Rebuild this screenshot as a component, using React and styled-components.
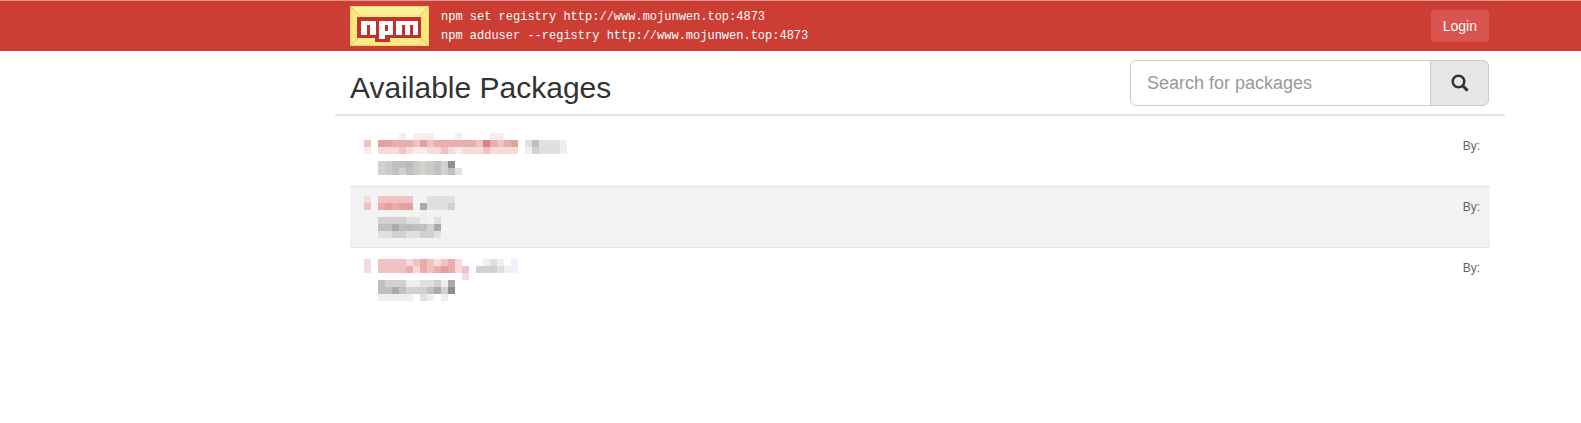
import React from "react";
import styled, { createGlobalStyle } from "styled-components";

const GlobalStyle = createGlobalStyle`
  * { box-sizing: border-box; }
  body {
    margin: 0;
    background: #fff;
    color: #333;
    font-family: "Liberation Sans", Arial, sans-serif;
    font-size: 14px;
    line-height: 20px;
  }
`;

const Header = styled.header`
  background: #cc3d33;
  border-top: 1px solid #dc9a92;
  padding: 0 92px 0 350px;
`;

const HeaderRow = styled.div`
  display: flex;
  align-items: center;
  height: 50px;
`;

const LogoLink = styled.a`
  display: block;
  margin-right: 12px;
  svg { display: block; }
`;

const Commands = styled.code`
  flex: 1;
  padding-top: 2px;
  color: #fff;
  font-family: Consolas, "Liberation Mono", monospace;
  font-size: 12px;
  line-height: 19px;
  white-space: pre;
`;

const LoginButton = styled.button`
  height: 32px;
  padding: 0 12px;
  border: 0;
  border-radius: 3px;
  background: #d9534f;
  color: #fff;
  font: inherit;
`;

const Main = styled.main`
  padding: 0 76px 0 335px;
`;

const TitleBar = styled.div`
  display: flex;
  justify-content: space-between;
  align-items: flex-start;
  height: 65px;
  padding: 9px 16px 0 15px;
  border-bottom: 2px solid #e4e4e4;
`;

const Title = styled.h2`
  margin: 11px 0 0;
  font-size: 30px;
  font-weight: 400;
  line-height: 34px;
`;

const SearchForm = styled.form`
  display: flex;
  width: 359px;
  height: 46px;
`;

const SearchInput = styled.input`
  flex: 1;
  min-width: 0;
  padding: 0 16px;
  border: 1px solid #ccc;
  border-radius: 6px 0 0 6px;
  background: #fff;
  color: #555;
  font: inherit;
  font-size: 18px;
  &::placeholder { color: #999; opacity: 1; }
`;

const SearchButton = styled.button`
  display: flex;
  align-items: center;
  justify-content: center;
  width: 59px;
  margin-left: -1px;
  padding: 0;
  border: 1px solid #ccc;
  border-radius: 0 6px 6px 0;
  background: #e6e6e6;
  color: #333;
`;

const PackageList = styled.ul`
  list-style: none;
  margin: 9px 15px 0;
  padding: 0;
`;

const PackageRow = styled.li`
  display: flex;
  justify-content: space-between;
  align-items: flex-start;
  height: 61px;
  padding: 7px 10px 0 14px;
  border-top: 1px solid transparent;
  &:nth-child(even) {
    height: 62px;
    margin-bottom: -1px;
    background: #f3f3f3;
    border-top-color: #e3e3e3;
    border-bottom: 1px solid #e3e3e3;
  }
`;

const Author = styled.span`
  padding-top: 3px;
  color: #666;
  font-size: 12px;
`;

const CELL = 7;

const shades = {
  a: "#faeceb", b: "#f7dbda", c: "#f0c3c2", d: "#eaadac", e: "#e5a09d", f: "#dc7f86",
  1: "#efeff0", 2: "#e0e0e1", 3: "#d1d1d2", 4: "#bfc0c0", 5: "#a9aaab", 6: "#8e8f94",
  p: "#c4b6b9", g: "#c9ccc4", v: "#eef1fb",
};

const packages = [
  {
    id: "first",
    top: 0,
    rows: [
      ".....a.aaa...a....aa",
      "c.eedddcecddddddcfdcde.242221",
      "a.bbbcbaabbcbabbbcbbbb.132221",
      "",
      "..3g44pg3g436",
      "..3g434g3g4342",
    ],
  },
  {
    id: "second",
    top: 2,
    rows: [
      "b.ccccc..2222",
      "c.dedee.52223",
      "........1....",
      "..3333221.2",
      "..4454p4435",
      "..223322332",
    ],
  },
  {
    id: "third",
    top: 4,
    rows: [
      "b.ccccbcdcbcdb...121.v",
      "b.ccccdbdcdedbc.33321v",
      "..............b",
      "..43331122315",
      "..44543334536",
      "..11111.21.1",
    ],
  },
];

function Mosaic({ rows, top }) {
  return (
    <svg width={29 * CELL} height={49} shapeRendering="crispEdges" aria-hidden="true">
      {rows.flatMap((row, y) =>
        [...row].map((key, x) =>
          shades[key] ? (
            <rect
              key={`${x}-${y}`}
              x={x * CELL}
              y={top + y * CELL}
              width={CELL}
              height={CELL}
              fill={shades[key]}
            />
          ) : null
        )
      )}
    </svg>
  );
}

function Logo() {
  return (
    <svg width="79" height="40" viewBox="0 0 79 40" role="img" aria-label="npm">
      <rect width="79" height="40" fill="#fde87c" />
      <path d="M0 0H79L70 9H9Z" fill="#fff09a" />
      <path d="M0 40H79L70 31H9Z" fill="#fbe886" />
      <path d="M0 0L9 9M79 0L70 9M0 40L9 31M79 40L70 31" stroke="#dcc06a" />
      <rect x="0.5" y="0.5" width="78" height="39" fill="none" stroke="#f8d868" />
      <path d="M7 11H71V32H40V36H25V32H7Z" fill="#c62f2e" />
      <path
        d="M11 15H26V29H20V19H17V29H11ZM29 15H43V29H35V33H29ZM35 19V25H38V19ZM46 15H68V29H63V19H60V29H55V19H52V29H46Z"
        fill="#fff"
        fillRule="evenodd"
      />
    </svg>
  );
}

function SearchIcon() {
  return (
    <svg width="18" height="18" viewBox="0 0 18 18" fill="none" stroke="currentColor" aria-hidden="true">
      <circle cx="7.5" cy="7.5" r="5.8" strokeWidth="2.5" />
      <path d="M11.7 11.7L16.6 16.6" strokeWidth="3" />
    </svg>
  );
}

export default function App() {
  return (
    <>
      <GlobalStyle />
      <Header>
        <HeaderRow>
          <LogoLink href="#"><Logo /></LogoLink>
          <Commands>
            {"npm set registry http://www.mojunwen.top:4873\nnpm adduser --registry http://www.mojunwen.top:4873"}
          </Commands>
          <LoginButton type="button">Login</LoginButton>
        </HeaderRow>
      </Header>
      <Main>
        <TitleBar>
          <Title>Available Packages</Title>
          <SearchForm role="search">
            <SearchInput type="text" placeholder="Search for packages" aria-label="Search for packages" />
            <SearchButton type="submit" aria-label="Search"><SearchIcon /></SearchButton>
          </SearchForm>
        </TitleBar>
        <PackageList>
          {packages.map((item) => (
            <PackageRow key={item.id}>
              <Mosaic rows={item.rows} top={item.top} />
              <Author>By:</Author>
            </PackageRow>
          ))}
        </PackageList>
      </Main>
    </>
  );
}
